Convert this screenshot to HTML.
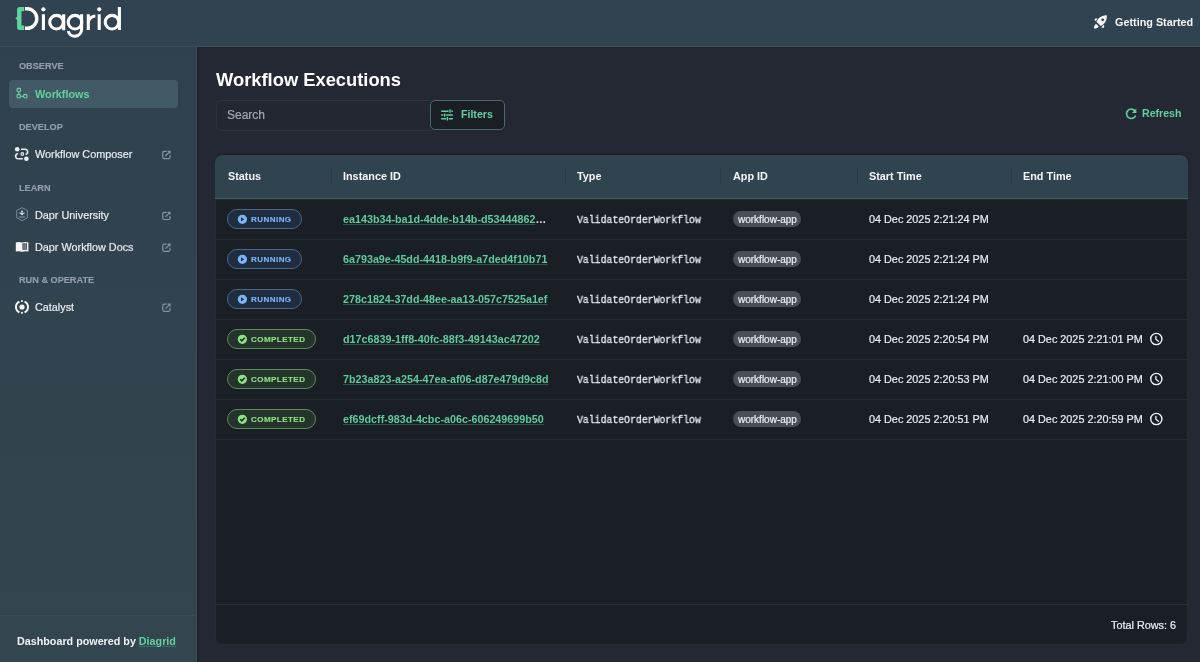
<!DOCTYPE html>
<html><head><meta charset="utf-8"><style>
*{box-sizing:border-box;margin:0;padding:0}
html,body{width:1200px;height:662px;overflow:hidden;background:#232833;font-family:"Liberation Sans",sans-serif;color:#e9ebee}
.t{position:absolute;white-space:nowrap;line-height:1;will-change:transform}
.b{font-weight:bold}
.ul{text-decoration:underline;text-decoration-color:#2d5447;text-underline-offset:0.5px}
.t:not(.b){-webkit-text-stroke:0.2px currentColor}
.abs{position:absolute}
svg{position:absolute;overflow:visible}
</style></head><body>
<div class="abs" style="left:0;top:0;width:1200px;height:46px;background:#314250"></div>
<div class="abs" style="left:0;top:46px;width:1200px;height:1px;background:#3f4e59"></div>
<div class="abs" style="left:0;top:47px;width:196px;height:615px;background:linear-gradient(#2f414d,#33464f)"></div>
<div class="abs" style="left:196px;top:47px;width:1px;height:615px;background:#3b4853"></div>
<div class="abs" style="left:197px;top:47px;width:3px;height:615px;background:linear-gradient(90deg,#1c242b,#232833)"></div>
<div class="abs" style="left:197px;top:47px;width:1003px;height:2px;background:linear-gradient(#1e262e,rgba(35,40,51,0))"></div>
<svg style="left:0;top:0" width="130" height="46" viewBox="0 0 130 46">
<path fill="#5fd39f" d="M24.2,6.9 H19.8 Q17.1,6.9 17.1,9.6 V16.3 Q17.1,17.5 15.7,18.1 Q15,18.45 15.7,18.8 Q17.1,19.4 17.1,20.6 V27.3 Q17.1,30 19.8,30 H24.2 V25.4 H21.5 V11.3 H24.2 Z"/>
<g fill="none" stroke="#fff" stroke-width="3.1">
<path stroke-width="3.4" d="M25,8.8 H27.05 A9.75,9.75 0 0 1 27.05,28.3 H25"/>
<path d="M43.4,14.3 V30.1 M63.7,14.3 V30.3 M88.3,14.3 V30.1 M99.2,14.3 V30.1 M119.4,7.1 V30.1"/>
<circle cx="56.5" cy="22.2" r="6.8"/>
<circle cx="75" cy="22.2" r="6.8"/>
<path d="M81.6,14.3 V29.3 A6.8,6.8 0 0 1 68.2,31"/>
<path d="M88.3,23 A7,7 0 0 1 95.3,16"/>
<circle cx="112" cy="22.2" r="6.8"/>
</g>
<circle cx="43.4" cy="9.3" r="2.1" fill="#fff"/>
<circle cx="99.2" cy="9.3" r="2.1" fill="#fff"/>
</svg>
<svg style="left:1088px;top:10px" width="24" height="24" viewBox="1088 10 24 24">
<g transform="translate(1102.4,20.1) rotate(-45)" fill="#f4f5f7">
<path d="M-5.4,-3 C-3,-4.2 3,-4.4 6.4,-0.3 C3,4.4 -3,4.2 -5.4,3 Z"/>
<circle cx="0.4" cy="0" r="1.35" fill="#314250"/>
<path d="M-6,-4.3 L-2.4,-4.3 Q-2.8,-6.2 -4.2,-6.2 L-5,-6.2 Z"/>
<path d="M-6,4.3 L-2.4,4.3 Q-2.8,6.2 -4.2,6.2 L-5,6.2 Z"/>
<path d="M-7,-2 C-8.8,-2.2 -10.8,-1.6 -11.8,0 C-10.8,1.6 -8.8,2.2 -7,2 Z"/>
</g></svg>
<div class="t b" style="left:1114.80px;top:17.29px;font-size:10.83px;color:#f2f4f6">Getting Started</div>

<div class="t b" style="left:18.70px;top:61.91px;font-size:9.17px;color:#939fa8;-webkit-text-stroke:0.15px #939fa8">OBSERVE</div>

<div class="abs" style="left:9px;top:80px;width:169px;height:28px;background:#415a66;border-radius:4px"></div>
<svg style="left:0;top:0" width="40" height="110">
<g fill="none" stroke="#6dd6a9" stroke-width="1.15">
<circle cx="18.8" cy="89.9" r="1.85"/><circle cx="18.8" cy="96.2" r="1.85"/><circle cx="25.3" cy="96.2" r="1.85"/>
<path d="M18.8,91.75 V94.35 M20.65,96.2 H23.45"/>
</g></svg>
<div class="t b" style="left:35.30px;top:89.09px;font-size:10.83px;color:#62d1a2">Workflows</div>

<div class="t b" style="left:18.90px;top:123.21px;font-size:9.17px;color:#939fa8;-webkit-text-stroke:0.15px #939fa8">DEVELOP</div>

<svg style="left:0;top:0" width="40" height="170">
<g fill="#eef1f3"><circle cx="17.2" cy="149.3" r="2.3"/><circle cx="26.4" cy="158.7" r="2.3"/></g>
<g fill="none" stroke="#eef1f3" stroke-width="1.5" stroke-linecap="round">
<path d="M21.6,149.3 H24.6 A2.6,2.6 0 0 1 26.2,154.2"/>
<path d="M22.3,158.7 H19.2 A2.6,2.6 0 0 1 17.4,153.8"/>
<circle cx="22.3" cy="153.9" r="1.3" stroke-width="1.1"/>
</g></svg>
<div class="t " style="left:35.20px;top:149.49px;font-size:10.83px;color:#e8ecef">Workflow Composer</div>

<div class="t b" style="left:18.80px;top:183.91px;font-size:9.17px;color:#939fa8;-webkit-text-stroke:0.15px #939fa8">LEARN</div>

<svg style="left:0;top:0" width="40" height="260">
<path fill="none" stroke="#7b8a94" stroke-width="1" d="M22,207.6 L27.4,210.5 V217.8 L22,220.7 L16.7,217.8 V210.5 Z"/>
<circle cx="22" cy="211.5" r="1" fill="#dfe5ea"/>
<path fill="#d5dce1" d="M18.5,212.8 H25.5 L22.7,214.5 L22,215.8 L21.3,214.5 Z"/>
<rect x="18.8" y="216.6" width="6.3" height="0.9" fill="#9aa7b0"/>
<path fill="#f4f6f8" d="M15.8,242.5 Q19,241.6 22,242.6 V251.8 Q19,250.9 15.8,251.6 Z"/>
<path fill="#f4f6f8" d="M22,242.6 Q25,241.6 28.4,242.5 V251.6 Q25,250.9 22,251.8 Z"/>
<rect x="22.4" y="243.3" width="4.6" height="6.5" fill="#4a545e"/>
<path stroke="#aab3bb" stroke-width="0.7" d="M24,244.3 V249.2 M25.6,244.3 V249.2"/>
</svg>
<div class="t " style="left:35.20px;top:209.69px;font-size:10.83px;color:#e8ecef">Dapr University</div>

<div class="t " style="left:35.20px;top:241.59px;font-size:10.83px;color:#e8ecef">Dapr Workflow Docs</div>

<div class="t b" style="left:18.75px;top:276.21px;font-size:9.17px;color:#939fa8;-webkit-text-stroke:0.15px #939fa8">RUN &amp; OPERATE</div>

<svg style="left:0;top:0" width="40" height="320">
<circle cx="22" cy="307" r="2.6" fill="#f4f6f8"/>
<g fill="none" stroke="#f4f6f8" stroke-width="2">
<path d="M19.46,301.56 A6,6 0 0 0 19.46,312.44"/>
<path d="M24.54,301.56 A6,6 0 0 1 24.54,312.44"/>
</g>
<rect x="21.1" y="300.2" width="1.8" height="1.8" fill="#f4f6f8"/>
<rect x="21.1" y="311.9" width="1.8" height="1.8" fill="#f4f6f8"/>
</svg>
<div class="t " style="left:35.00px;top:302.49px;font-size:10.83px;color:#e8ecef">Catalyst</div>

<svg style="left:0;top:0" width="190" height="320"><g transform="translate(162.2,150.80)"><path fill="none" stroke="#8794a0" stroke-width="1.2" d="M4.5,0.6 H1.8 Q0.6,0.6 0.6,1.8 V6.6 Q0.6,7.8 1.8,7.8 H6.6 Q7.8,7.8 7.8,6.6 V4.2 M3.2,5.2 L7.8,0.6 M5.5,0.6 H7.8 V2.9"/></g><g transform="translate(162.2,211.70)"><path fill="none" stroke="#8794a0" stroke-width="1.2" d="M4.5,0.6 H1.8 Q0.6,0.6 0.6,1.8 V6.6 Q0.6,7.8 1.8,7.8 H6.6 Q7.8,7.8 7.8,6.6 V4.2 M3.2,5.2 L7.8,0.6 M5.5,0.6 H7.8 V2.9"/></g><g transform="translate(162.2,243.50)"><path fill="none" stroke="#8794a0" stroke-width="1.2" d="M4.5,0.6 H1.8 Q0.6,0.6 0.6,1.8 V6.6 Q0.6,7.8 1.8,7.8 H6.6 Q7.8,7.8 7.8,6.6 V4.2 M3.2,5.2 L7.8,0.6 M5.5,0.6 H7.8 V2.9"/></g><g transform="translate(162.2,303.50)"><path fill="none" stroke="#8794a0" stroke-width="1.2" d="M4.5,0.6 H1.8 Q0.6,0.6 0.6,1.8 V6.6 Q0.6,7.8 1.8,7.8 H6.6 Q7.8,7.8 7.8,6.6 V4.2 M3.2,5.2 L7.8,0.6 M5.5,0.6 H7.8 V2.9"/></g></svg>
<div class="abs" style="left:0;top:615px;width:196px;height:1px;background:#3c4b56"></div>
<div class="t b" style="left:17.00px;top:636.36px;font-size:10.75px;color:#f1f3f5">Dashboard powered by <span style="color:#62d1a2;text-decoration:underline;text-decoration-color:#3f6e63;text-underline-offset:1px">Diagrid</span></div>

<div class="t b" style="left:215.80px;top:70.62px;font-size:18.33px;color:#fff">Workflow Executions</div>

<div class="abs" style="left:216px;top:99.5px;width:220px;height:31px;border:1px solid #2e343e;border-radius:6px;background:#222731"></div>
<div class="t " style="left:227.30px;top:109.20px;font-size:12px;color:#a2a8af">Search</div>

<div class="abs" style="left:430px;top:100px;width:75px;height:30px;border:1px solid #4a6a67;border-radius:5px;background:#1a1e25"></div>
<svg style="left:0;top:0" width="460" height="130">
<g stroke="#63cfa0" stroke-width="1.4" fill="none">
<path d="M441.2,111.2 H448.6 M451.4,111.2 H452.9 M441.2,115 H443.3 M446.1,115 H452.9 M441.2,118.7 H445.9 M448.7,118.7 H452.9"/>
<path d="M450,109.2 V112.8 M444.7,113.4 V116.7 M447.3,117.1 V120.6"/>
</g></svg>
<div class="t b" style="left:461.40px;top:109.29px;font-size:10.6px;color:#63cfa0">Filters</div>

<svg style="left:0;top:0" width="1140" height="125">
<path fill="none" stroke="#63cfa0" stroke-width="1.6" d="M1135.2,111.2 A4.7,4.7 0 1 0 1135.6,115.6"/>
<path fill="#63cfa0" d="M1136.4,108.5 V113 H1131.9 Z"/>
</svg>
<div class="t b" style="left:1142.00px;top:108.39px;font-size:10.6px;color:#63cfa0">Refresh</div>

<div class="abs" style="left:217px;top:156px;width:969px;height:40px;border-radius:8px;box-shadow:0 -2px 3px 0 rgba(0,0,0,0.35)"></div>
<div class="abs" style="left:215px;top:155px;width:973px;height:490px;background:#1a1e25;border-radius:8px;overflow:hidden;box-shadow:inset 0 0 0 1px rgba(90,110,125,0.18)">
<div class="abs" style="left:0;top:0;width:973px;height:44px;background:#304450"></div>
<div class="abs" style="left:0;top:43px;width:973px;height:1px;background:#44605a"></div>
<div class="abs" style="left:0;top:44px;width:973px;height:1px;background:#222a2f"></div>
<div class="abs" style="left:116px;top:13px;width:1px;height:17px;background:#293945"></div>
<div class="abs" style="left:350px;top:13px;width:1px;height:17px;background:#293945"></div>
<div class="abs" style="left:505px;top:13px;width:1px;height:17px;background:#293945"></div>
<div class="abs" style="left:642px;top:13px;width:1px;height:17px;background:#293945"></div>
<div class="abs" style="left:796px;top:13px;width:1px;height:17px;background:#293945"></div>
<div class="abs" style="left:0;top:84px;width:973px;height:1px;background:#262b33"></div>
<div class="abs" style="left:0;top:124px;width:973px;height:1px;background:#262b33"></div>
<div class="abs" style="left:0;top:164px;width:973px;height:1px;background:#262b33"></div>
<div class="abs" style="left:0;top:204px;width:973px;height:1px;background:#262b33"></div>
<div class="abs" style="left:0;top:244px;width:973px;height:1px;background:#262b33"></div>
<div class="abs" style="left:0;top:284px;width:973px;height:1px;background:#262b33"></div>
<div class="abs" style="left:0;top:449px;width:973px;height:1px;background:#2b3038"></div>
</div>
<div class="t b" style="left:227.70px;top:170.79px;font-size:10.83px;color:#f3f5f6">Status</div>

<div class="t b" style="left:342.70px;top:170.79px;font-size:10.83px;color:#f3f5f6">Instance ID</div>

<div class="t b" style="left:577.00px;top:170.79px;font-size:10.83px;color:#f3f5f6">Type</div>

<div class="t b" style="left:733.00px;top:170.79px;font-size:10.83px;color:#f3f5f6">App ID</div>

<div class="t b" style="left:869.00px;top:170.79px;font-size:10.83px;color:#f3f5f6">Start Time</div>

<div class="t b" style="left:1023.00px;top:170.79px;font-size:10.83px;color:#f3f5f6">End Time</div>

<div class="abs" style="left:227.2px;top:209.2px;width:75px;height:20.2px;border-radius:10.1px;background:#202c3f;border:1px solid #4a698c"></div>
<svg style="left:0;top:0" width="1" height="1"><circle cx="242.4" cy="219.3" r="4.6" fill="#7ab5f5"/><path fill="#1d2a3c" d="M241,217.2 L244.2,219.3 L241,221.4 Z"/></svg>
<div class="t b" style="left:251.30px;top:215.70px;font-size:8px;color:#78b3f5;letter-spacing:0.46px;-webkit-text-stroke:0.15px #78b3f5">RUNNING</div>

<div class="t b" style="left:342.70px;top:213.66px;font-size:10.75px;color:#5fcb9d"><span class="ul">ea143b34-ba1d-4dde-b14b-d53444862</span><span style="color:#e3e6e9">…</span></div>

<div class="t" style="left:576.5px;top:214.87px;font-family:'Liberation Mono',monospace;font-size:10.6px;color:#e9ebed;-webkit-text-stroke:0.3px #e9ebed;transform:scaleX(0.927);transform-origin:0 0">ValidateOrderWorkflow</div>
<div class="abs" style="left:732.5px;top:211px;width:68.6px;height:16px;border-radius:8px;background:#4a4f57"></div>
<div class="t " style="left:737.80px;top:214.50px;font-size:10px;color:#eceef0">workflow-app</div>

<div class="t " style="left:869.00px;top:213.79px;font-size:10.83px;color:#eceef0">04 Dec 2025 2:21:24 PM</div>

<div class="abs" style="left:227.2px;top:249.2px;width:75px;height:20.2px;border-radius:10.1px;background:#202c3f;border:1px solid #4a698c"></div>
<svg style="left:0;top:0" width="1" height="1"><circle cx="242.4" cy="259.3" r="4.6" fill="#7ab5f5"/><path fill="#1d2a3c" d="M241,257.2 L244.2,259.3 L241,261.4 Z"/></svg>
<div class="t b" style="left:251.30px;top:255.70px;font-size:8px;color:#78b3f5;letter-spacing:0.46px;-webkit-text-stroke:0.15px #78b3f5">RUNNING</div>

<div class="t b" style="left:342.70px;top:253.66px;font-size:10.75px;color:#5fcb9d"><span class="ul">6a793a9e-45dd-4418-b9f9-a7ded4f10b71</span></div>

<div class="t" style="left:576.5px;top:254.87px;font-family:'Liberation Mono',monospace;font-size:10.6px;color:#e9ebed;-webkit-text-stroke:0.3px #e9ebed;transform:scaleX(0.927);transform-origin:0 0">ValidateOrderWorkflow</div>
<div class="abs" style="left:732.5px;top:251px;width:68.6px;height:16px;border-radius:8px;background:#4a4f57"></div>
<div class="t " style="left:737.80px;top:254.50px;font-size:10px;color:#eceef0">workflow-app</div>

<div class="t " style="left:869.00px;top:253.79px;font-size:10.83px;color:#eceef0">04 Dec 2025 2:21:24 PM</div>

<div class="abs" style="left:227.2px;top:289.2px;width:75px;height:20.2px;border-radius:10.1px;background:#202c3f;border:1px solid #4a698c"></div>
<svg style="left:0;top:0" width="1" height="1"><circle cx="242.4" cy="299.3" r="4.6" fill="#7ab5f5"/><path fill="#1d2a3c" d="M241,297.2 L244.2,299.3 L241,301.4 Z"/></svg>
<div class="t b" style="left:251.30px;top:295.70px;font-size:8px;color:#78b3f5;letter-spacing:0.46px;-webkit-text-stroke:0.15px #78b3f5">RUNNING</div>

<div class="t b" style="left:342.70px;top:293.66px;font-size:10.75px;color:#5fcb9d"><span class="ul">278c1824-37dd-48ee-aa13-057c7525a1ef</span></div>

<div class="t" style="left:576.5px;top:294.87px;font-family:'Liberation Mono',monospace;font-size:10.6px;color:#e9ebed;-webkit-text-stroke:0.3px #e9ebed;transform:scaleX(0.927);transform-origin:0 0">ValidateOrderWorkflow</div>
<div class="abs" style="left:732.5px;top:291px;width:68.6px;height:16px;border-radius:8px;background:#4a4f57"></div>
<div class="t " style="left:737.80px;top:294.50px;font-size:10px;color:#eceef0">workflow-app</div>

<div class="t " style="left:869.00px;top:293.79px;font-size:10.83px;color:#eceef0">04 Dec 2025 2:21:24 PM</div>

<div class="abs" style="left:227.2px;top:329.2px;width:88.6px;height:20.2px;border-radius:10.1px;background:#24342a;border:1px solid #5e8b5b"></div>
<svg style="left:0;top:0" width="1" height="1"><circle cx="242.4" cy="339.3" r="4.6" fill="#8ee084"/><path fill="none" stroke="#1d2b20" stroke-width="1.5" d="M240.2,339.3 L241.8,340.9 L244.7,337.8"/></svg>
<div class="t b" style="left:251.30px;top:335.70px;font-size:8px;color:#8fe186;letter-spacing:0.46px;-webkit-text-stroke:0.15px #8fe186">COMPLETED</div>

<div class="t b" style="left:342.70px;top:333.66px;font-size:10.75px;color:#5fcb9d"><span class="ul">d17c6839-1ff8-40fc-88f3-49143ac47202</span></div>

<div class="t" style="left:576.5px;top:334.87px;font-family:'Liberation Mono',monospace;font-size:10.6px;color:#e9ebed;-webkit-text-stroke:0.3px #e9ebed;transform:scaleX(0.927);transform-origin:0 0">ValidateOrderWorkflow</div>
<div class="abs" style="left:732.5px;top:331px;width:68.6px;height:16px;border-radius:8px;background:#4a4f57"></div>
<div class="t " style="left:737.80px;top:334.50px;font-size:10px;color:#eceef0">workflow-app</div>

<div class="t " style="left:869.00px;top:333.79px;font-size:10.83px;color:#eceef0">04 Dec 2025 2:20:54 PM</div>

<div class="t " style="left:1023.00px;top:333.79px;font-size:10.83px;color:#eceef0">04 Dec 2025 2:21:01 PM</div>

<svg style="left:0;top:0" width="1" height="1"><circle cx="1156.3" cy="339" r="5.6" fill="none" stroke="#f0f2f4" stroke-width="1.4"/><path fill="none" stroke="#f0f2f4" stroke-width="1.3" stroke-linecap="round" d="M1155.9,336.3 V339.3 L1158.4,341.3"/></svg>
<div class="abs" style="left:227.2px;top:369.2px;width:88.6px;height:20.2px;border-radius:10.1px;background:#24342a;border:1px solid #5e8b5b"></div>
<svg style="left:0;top:0" width="1" height="1"><circle cx="242.4" cy="379.3" r="4.6" fill="#8ee084"/><path fill="none" stroke="#1d2b20" stroke-width="1.5" d="M240.2,379.3 L241.8,380.9 L244.7,377.8"/></svg>
<div class="t b" style="left:251.30px;top:375.70px;font-size:8px;color:#8fe186;letter-spacing:0.46px;-webkit-text-stroke:0.15px #8fe186">COMPLETED</div>

<div class="t b" style="left:342.70px;top:373.66px;font-size:10.75px;color:#5fcb9d"><span class="ul">7b23a823-a254-47ea-af06-d87e479d9c8d</span></div>

<div class="t" style="left:576.5px;top:374.87px;font-family:'Liberation Mono',monospace;font-size:10.6px;color:#e9ebed;-webkit-text-stroke:0.3px #e9ebed;transform:scaleX(0.927);transform-origin:0 0">ValidateOrderWorkflow</div>
<div class="abs" style="left:732.5px;top:371px;width:68.6px;height:16px;border-radius:8px;background:#4a4f57"></div>
<div class="t " style="left:737.80px;top:374.50px;font-size:10px;color:#eceef0">workflow-app</div>

<div class="t " style="left:869.00px;top:373.79px;font-size:10.83px;color:#eceef0">04 Dec 2025 2:20:53 PM</div>

<div class="t " style="left:1023.00px;top:373.79px;font-size:10.83px;color:#eceef0">04 Dec 2025 2:21:00 PM</div>

<svg style="left:0;top:0" width="1" height="1"><circle cx="1156.3" cy="379" r="5.6" fill="none" stroke="#f0f2f4" stroke-width="1.4"/><path fill="none" stroke="#f0f2f4" stroke-width="1.3" stroke-linecap="round" d="M1155.9,376.3 V379.3 L1158.4,381.3"/></svg>
<div class="abs" style="left:227.2px;top:409.2px;width:88.6px;height:20.2px;border-radius:10.1px;background:#24342a;border:1px solid #5e8b5b"></div>
<svg style="left:0;top:0" width="1" height="1"><circle cx="242.4" cy="419.3" r="4.6" fill="#8ee084"/><path fill="none" stroke="#1d2b20" stroke-width="1.5" d="M240.2,419.3 L241.8,420.9 L244.7,417.8"/></svg>
<div class="t b" style="left:251.30px;top:415.70px;font-size:8px;color:#8fe186;letter-spacing:0.46px;-webkit-text-stroke:0.15px #8fe186">COMPLETED</div>

<div class="t b" style="left:342.70px;top:413.66px;font-size:10.75px;color:#5fcb9d"><span class="ul">ef69dcff-983d-4cbc-a06c-606249699b50</span></div>

<div class="t" style="left:576.5px;top:414.87px;font-family:'Liberation Mono',monospace;font-size:10.6px;color:#e9ebed;-webkit-text-stroke:0.3px #e9ebed;transform:scaleX(0.927);transform-origin:0 0">ValidateOrderWorkflow</div>
<div class="abs" style="left:732.5px;top:411px;width:68.6px;height:16px;border-radius:8px;background:#4a4f57"></div>
<div class="t " style="left:737.80px;top:414.50px;font-size:10px;color:#eceef0">workflow-app</div>

<div class="t " style="left:869.00px;top:413.79px;font-size:10.83px;color:#eceef0">04 Dec 2025 2:20:51 PM</div>

<div class="t " style="left:1023.00px;top:413.79px;font-size:10.83px;color:#eceef0">04 Dec 2025 2:20:59 PM</div>

<svg style="left:0;top:0" width="1" height="1"><circle cx="1156.3" cy="419" r="5.6" fill="none" stroke="#f0f2f4" stroke-width="1.4"/><path fill="none" stroke="#f0f2f4" stroke-width="1.3" stroke-linecap="round" d="M1155.9,416.3 V419.3 L1158.4,421.3"/></svg>
<div class="t " style="left:1111.00px;top:619.54px;font-size:10.83px;color:#eceef0">Total Rows: 6</div>

</body></html>
